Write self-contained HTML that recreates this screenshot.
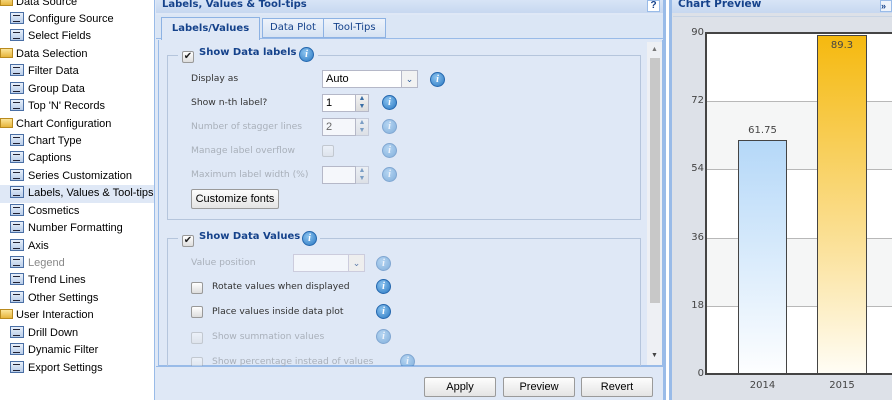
<!DOCTYPE html>
<html><head><style>
*{margin:0;padding:0;box-sizing:border-box}
body{width:892px;height:400px;overflow:hidden;background:#fff;font-family:"Liberation Sans",sans-serif;position:relative}
.a{position:absolute}
.side{left:0;top:0;width:155px;height:400px;background:#fff;border-right:1px solid #99bbe8}
.it{position:absolute;font-size:11px;color:#000;height:17px;line-height:17px;white-space:nowrap}
.doc{display:inline-block;width:14px;height:12px;border:1px solid #4a6fa5;background:linear-gradient(#e8f0fb,#b8cce8);vertical-align:-2px;margin-right:4px;position:relative}
.doc:after{content:"";position:absolute;left:2px;top:2px;width:7px;height:5px;border-top:1px solid #223;border-bottom:1px solid #223}
.fold{display:inline-block;width:13px;height:10px;background:linear-gradient(#fbe59a,#e6b53c);border:1px solid #b98a1e;vertical-align:-1px;margin-right:3px}
.hdr{background:linear-gradient(#dae6f7,#c7d8f0);color:#15428b;font-weight:bold;font-size:10px;font-family:"DejaVu Sans",sans-serif;height:15px;line-height:13px;padding-left:6px}
.lbl{position:absolute;font-family:"DejaVu Sans",sans-serif;font-size:9.2px;color:#333;white-space:nowrap}
.dis{color:#a9b0ba}
.info{position:absolute;width:15px;height:15px;border-radius:50%;background:radial-gradient(circle at 40% 35%,#8cc4f0,#2a78c2);border:1px solid #2467ae;color:#fff;font:italic bold 10px "Liberation Serif",serif;text-align:center;line-height:13px}
.info.d{opacity:.5}
.btn{position:absolute;height:20px;border:1px solid #9a9a9a;border-radius:2px;background:linear-gradient(#fdfdfd,#e4e4e4);font-size:11px;text-align:center;line-height:18px;color:#000}
.cb{position:absolute;width:12px;height:12px;border:1px solid #999;border-radius:2px;background:linear-gradient(#fff,#ddd);font-size:10px;line-height:10px;text-align:center;color:#222}
.cb.d{opacity:.4}
.inp{position:absolute;height:18px;border:1px solid #b5b8c8;background:#fff;font-size:11px;padding-left:3px;line-height:16px}
.spin{position:absolute;width:14px;height:18px;border:1px solid #b5b8c8;background:linear-gradient(#f4f4f4,#dcdcdc);font-size:7px;color:#3a6ea5;text-align:center;line-height:8px}
fieldset{position:absolute;border:1px solid #b5c5dc}
.yl{position:absolute;right:188px;font-family:"DejaVu Sans",sans-serif;font-size:10px;color:#444;width:30px;text-align:right}
.gl{position:absolute;left:706px;width:186px;border-top:1px solid #b8b8b8}
</style></head><body>
<div class="a side">
<div class="it" style="left:0;top:-6px"><span class="fold"></span>Data Source</div>
<div class="it" style="left:10px;top:11px"><span class="doc"></span>Configure Source</div>
<div class="it" style="left:10px;top:28px"><span class="doc"></span>Select Fields</div>
<div class="it" style="left:0;top:46px"><span class="fold"></span>Data Selection</div>
<div class="it" style="left:10px;top:63px"><span class="doc"></span>Filter Data</div>
<div class="it" style="left:10px;top:81px"><span class="doc"></span>Group Data</div>
<div class="it" style="left:10px;top:98px"><span class="doc"></span>Top 'N' Records</div>
<div class="it" style="left:0;top:116px"><span class="fold"></span>Chart Configuration</div>
<div class="it" style="left:10px;top:133px"><span class="doc"></span>Chart Type</div>
<div class="it" style="left:10px;top:150px"><span class="doc"></span>Captions</div>
<div class="it" style="left:10px;top:168px"><span class="doc"></span>Series Customization</div>
<div class="a" style="left:0;top:185px;width:154px;height:18px;background:#dfe8f6"></div>
<div class="it" style="left:10px;top:185px"><span class="doc"></span>Labels, Values &amp; Tool-tips</div>
<div class="it" style="left:10px;top:203px"><span class="doc"></span>Cosmetics</div>
<div class="it" style="left:10px;top:220px"><span class="doc"></span>Number Formatting</div>
<div class="it" style="left:10px;top:238px"><span class="doc"></span>Axis</div>
<div class="it" style="left:10px;top:255px;color:#888"><span class="doc"></span>Legend</div>
<div class="it" style="left:10px;top:272px"><span class="doc"></span>Trend Lines</div>
<div class="it" style="left:10px;top:290px"><span class="doc"></span>Other Settings</div>
<div class="it" style="left:0;top:307px"><span class="fold"></span>User Interaction</div>
<div class="it" style="left:10px;top:325px"><span class="doc"></span>Drill Down</div>
<div class="it" style="left:10px;top:342px"><span class="doc"></span>Dynamic Filter</div>
<div class="it" style="left:10px;top:360px"><span class="doc"></span>Export Settings</div>
</div>

<div class="a" style="left:155px;top:0;width:511px;height:400px;background:#dfe8f6;border-right:3px solid #99bbe8"></div>
<div class="a hdr" style="left:156px;top:-2px;width:507px">Labels, Values &amp; Tool-tips</div>
<div class="a" style="left:647px;top:0;width:13px;height:12px;border:1px solid #99bbe8;background:#fff;color:#15428b;font:bold 10px sans-serif;text-align:center;line-height:10px">?</div>
<div class="a" style="left:156px;top:15px;width:507px;height:24px;background:#dbe6f5;border-bottom:1px solid #99bbe8"></div>
<div class="a" style="left:161px;top:17px;width:99px;height:23px;background:#dfe8f6;border:1px solid #8db2e3;border-bottom:none;font:bold 10px 'DejaVu Sans',sans-serif;color:#15428b;text-align:center;line-height:21px">Labels/Values</div>
<div class="a" style="left:262px;top:18px;width:62px;height:20px;background:linear-gradient(#eef3fb,#d6e3f3);border:1px solid #8db2e3;font:10px 'DejaVu Sans',sans-serif;color:#15428b;text-align:center;line-height:18px">Data Plot</div>
<div class="a" style="left:323px;top:18px;width:63px;height:20px;background:linear-gradient(#eef3fb,#d6e3f3);border:1px solid #8db2e3;font:10px 'DejaVu Sans',sans-serif;color:#15428b;text-align:center;line-height:18px">Tool-Tips</div>
<div class="a" style="left:158px;top:40px;width:505px;height:326px;border:1px solid #99bbe8;border-top:none"></div>
<div class="a" style="left:647px;top:42px;width:15px;height:323px;background:#eef0f4"></div>
<div class="a" style="left:650px;top:58px;width:10px;height:245px;background:#c8c8c8"></div>
<div class="a" style="left:651px;top:46px;font-size:7px;color:#777">▲</div>
<div class="a" style="left:651px;top:352px;font-size:7px;color:#444">▼</div>

<fieldset style="left:167px;top:55px;width:474px;height:165px"></fieldset>
<div class="a" style="left:178px;top:47px;width:140px;height:16px;background:#dfe8f6"></div>
<div class="cb" style="left:182px;top:51px">✔</div>
<div class="lbl" style="left:199px;top:47px;font-weight:bold;font-size:10px;color:#15428b">Show Data labels</div>
<div class="info" style="left:299px;top:47px">i</div>
<div class="lbl" style="left:191px;top:73px">Display as</div>
<div class="inp" style="left:322px;top:70px;width:96px">Auto</div>
<div class="a" style="left:401px;top:70px;width:17px;height:18px;border:1px solid #b5b8c8;background:#f2f2f2;color:#2a5a9a;font-size:9px;text-align:center;line-height:16px">⌄</div>
<div class="info" style="left:430px;top:72px">i</div>
<div class="lbl" style="left:191px;top:97px">Show n-th label?</div>
<div class="inp" style="left:322px;top:94px;width:34px">1</div>
<div class="spin" style="left:355px;top:94px">▲<br>▼</div>
<div class="info" style="left:382px;top:95px">i</div>
<div class="lbl dis" style="left:191px;top:121px">Number of stagger lines</div>
<div class="inp" style="left:322px;top:118px;width:34px;color:#666;background:#f5f7fb">2</div>
<div class="spin" style="left:355px;top:118px;opacity:.6">▲<br>▼</div>
<div class="info d" style="left:382px;top:119px">i</div>
<div class="lbl dis" style="left:191px;top:145px">Manage label overflow</div>
<div class="cb d" style="left:322px;top:145px"></div>
<div class="info d" style="left:382px;top:143px">i</div>
<div class="lbl dis" style="left:191px;top:169px">Maximum label width (%)</div>
<div class="inp" style="left:322px;top:166px;width:34px;background:#f5f7fb"></div>
<div class="spin" style="left:355px;top:166px;opacity:.6">▲<br>▼</div>
<div class="info d" style="left:382px;top:167px">i</div>
<div class="btn" style="left:191px;top:189px;width:88px">Customize fonts</div>

<fieldset style="left:167px;top:238px;width:474px;height:140px;border-bottom:none"></fieldset>
<div class="a" style="left:178px;top:230px;width:142px;height:16px;background:#dfe8f6"></div>
<div class="cb" style="left:182px;top:235px">✔</div>
<div class="lbl" style="left:199px;top:231px;font-weight:bold;font-size:10px;color:#15428b">Show Data Values</div>
<div class="info" style="left:302px;top:231px">i</div>
<div class="lbl dis" style="left:191px;top:257px">Value position</div>
<div class="inp" style="left:293px;top:254px;width:56px;background:#f3f6fb;border-color:#ccd"></div>
<div class="a" style="left:348px;top:254px;width:17px;height:18px;border:1px solid #ccd;background:#eee;color:#5a7aaa;font-size:9px;text-align:center;line-height:16px">⌄</div>
<div class="info d" style="left:376px;top:256px">i</div>
<div class="cb" style="left:191px;top:282px"></div>
<div class="lbl" style="left:212px;top:281px">Rotate values when displayed</div>
<div class="info" style="left:376px;top:279px">i</div>
<div class="cb" style="left:191px;top:306px"></div>
<div class="lbl" style="left:212px;top:306px">Place values inside data plot</div>
<div class="info" style="left:376px;top:304px">i</div>
<div class="cb d" style="left:191px;top:332px"></div>
<div class="lbl dis" style="left:212px;top:331px">Show summation values</div>
<div class="info d" style="left:376px;top:329px">i</div>
<div class="cb d" style="left:191px;top:357px"></div>
<div class="lbl dis" style="left:212px;top:356px">Show percentage instead of values</div>
<div class="info d" style="left:400px;top:354px">i</div>
<div class="a" style="left:156px;top:366px;width:507px;height:34px;background:#dfe8f6;border-top:1px solid #99bbe8"></div>
<div class="btn" style="left:424px;top:377px;width:72px">Apply</div>
<div class="btn" style="left:503px;top:377px;width:72px">Preview</div>
<div class="btn" style="left:581px;top:377px;width:72px">Revert</div>

<div class="a" style="left:669px;top:0;width:223px;height:400px;background:#dde1e8;border-left:3px solid #99bbe8"></div>
<div class="a hdr" style="left:672px;top:-2px;width:220px;font-size:10.5px">Chart Preview</div>
<div class="a" style="left:880px;top:0;width:12px;height:12px;border:1px solid #99bbe8;background:#eef3fb;color:#15428b;font:bold 9px sans-serif;line-height:10px">»</div>
<div class="a" style="left:673px;top:16px;width:219px;height:1px;background:#c8d4e4"></div>
<div class="a" style="left:706px;top:33px;width:186px;height:341px;background:#fff"></div>
<div class="a" style="left:706px;top:101px;width:186px;height:68px;background:#f5f6f6"></div>
<div class="a" style="left:706px;top:238px;width:186px;height:68px;background:#f5f6f6"></div>
<div class="gl" style="top:101px"></div><div class="gl" style="top:169px"></div><div class="gl" style="top:238px"></div><div class="gl" style="top:306px"></div>
<div class="a" style="left:705px;top:32px;width:187px;height:343px;border:2px solid #444;border-right:none"></div>
<div class="yl" style="top:27px">90</div><div class="yl" style="top:95px">72</div><div class="yl" style="top:163px">54</div><div class="yl" style="top:232px">36</div><div class="yl" style="top:300px">18</div><div class="yl" style="top:368px">0</div>
<div class="a" style="left:738px;top:140px;width:49px;height:234px;border:1px solid #444;background:linear-gradient(#b5d8f8,#fdfeff)"></div>
<div class="a" style="left:817px;top:35px;width:50px;height:339px;border:1px solid #444;background:linear-gradient(#f5b90f,#fbe3a0 65%,#fffdf5)"></div>
<div class="a" style="left:738px;top:125px;width:49px;text-align:center;font:10px 'DejaVu Sans',sans-serif;color:#444">61.75</div>
<div class="a" style="left:817px;top:40px;width:50px;text-align:center;font:10px 'DejaVu Sans',sans-serif;color:#444">89.3</div>
<div class="a" style="left:738px;top:380px;width:49px;text-align:center;font:10px 'DejaVu Sans',sans-serif;color:#444">2014</div>
<div class="a" style="left:817px;top:380px;width:50px;text-align:center;font:10px 'DejaVu Sans',sans-serif;color:#444">2015</div>
</body></html>
